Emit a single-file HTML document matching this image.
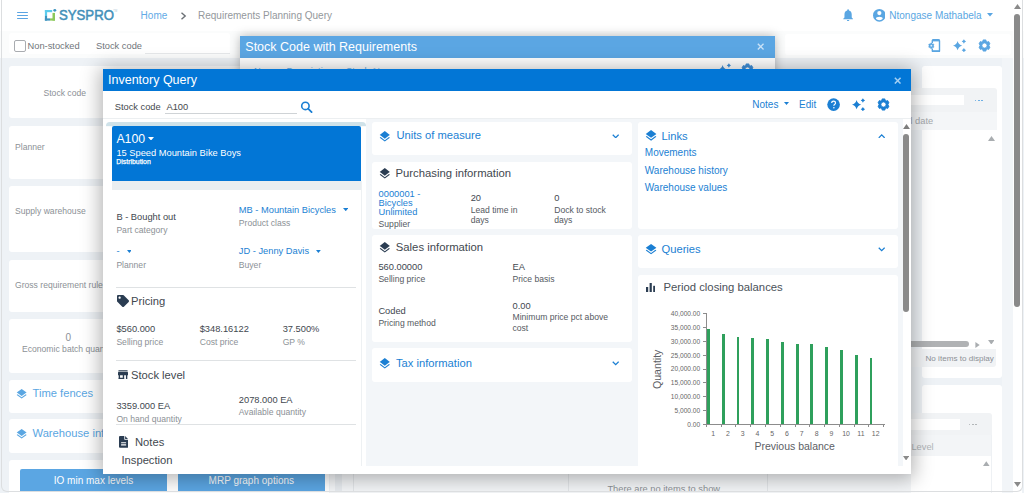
<!DOCTYPE html><html><head><meta charset="utf-8"><title>Inventory Query</title><style>
*{box-sizing:border-box}
html,body{margin:0;padding:0}
body{width:1024px;height:493px;overflow:hidden;position:relative;background:#fff;font-family:"Liberation Sans",sans-serif}
.t{position:absolute;line-height:1;white-space:nowrap}
.r{position:absolute;display:block}
</style></head><body>
<div class="r" style="left:0px;top:58px;width:1024px;height:435px;background:#eef2f6;"></div>
<div class="r" style="left:0px;top:0px;width:1024px;height:31px;background:#ffffff;box-shadow:0 1px 1px rgba(0,0,0,0.06)"></div>
<div class="r" style="left:17px;top:11.75px;width:11.3px;height:1.3px;background:#5aa4e2;border-radius:0.6px"></div>
<div class="r" style="left:17px;top:14.8px;width:11.3px;height:1.3px;background:#5aa4e2;border-radius:0.6px"></div>
<div class="r" style="left:17px;top:17.85px;width:11.3px;height:1.3px;background:#5aa4e2;border-radius:0.6px"></div>
<svg class="r" style="left:44px;top:8px;" width="13" height="13" viewBox="0 0 13 13"><rect x="0.9" y="2" width="7.3" height="2.2" fill="#5ccbec"/><rect x="0.9" y="2" width="2.2" height="6" fill="#5ccbec"/><rect x="0.9" y="7.9" width="2.2" height="4.7" fill="#3e94bf"/><rect x="0.9" y="10.4" width="5.1" height="2.2" fill="#3e94bf"/><rect x="8.5" y="4.9" width="2.5" height="7.7" fill="#8cc85a"/><rect x="6" y="10.4" width="5" height="2.2" fill="#8cc85a"/><circle cx="10.8" cy="2.35" r="1.45" fill="#3e94bf"/></svg>
<div class="t" style="left:59.20px;top:9.22px;font-size:13.8px;color:#4390b9;-webkit-text-stroke:0.5px #4390b9;transform:scaleX(0.955);transform-origin:left">SYSPRO</div>
<div class="t" style="left:113.30px;top:10.90px;font-size:2.6px;color:#a9c4d2;">TM</div>
<div class="t" style="left:140.60px;top:11.44px;font-size:10px;color:#62aae6;">Home</div>
<svg class="r" style="left:180px;top:12px;" width="7" height="8" viewBox="0 0 7 8"><polyline points="1.5,0.8 5.2,4 1.5,7.2" fill="none" stroke="#6b7075" stroke-width="1.4"/></svg>
<div class="t" style="left:198.00px;top:11.44px;font-size:10px;color:#94989c;">Requirements Planning Query</div>
<svg class="r" style="left:842.8px;top:9.4px;preserveAspectRatio:none" width="10.2" height="12.1" viewBox="4 2 16 20"><path d="M12 22c1.1 0 2-.9 2-2h-4c0 1.1.89 2 2 2zm6-6v-5c0-3.07-1.64-5.64-4.5-6.32V4c0-.83-.67-1.5-1.5-1.5s-1.5.67-1.5 1.5v.68C7.63 5.36 6 7.92 6 11v5l-2 2v1h16v-1l-2-2z" fill="#5aa6e2"/></svg>
<svg class="r" style="left:872.7px;top:9px;" width="12.7" height="12.7" viewBox="0 0 24 24"><circle cx="12" cy="12" r="12" fill="#5aa6e2"/><circle cx="12" cy="7.7" r="4" fill="#fff"/><path d="M5.6 17.6c0-1.6 2.8-3.1 6.4-3.1s6.4 1.5 6.4 3.1c0 1.9-2.8 3.5-6.4 3.5s-6.4-1.6-6.4-3.5z" fill="#fff"/></svg>
<div class="t" style="left:889.30px;top:10.94px;font-size:10px;color:#5aa6e2;">Ntongase Mathabela</div>
<svg class="r" style="left:987px;top:13px;" width="6" height="3.5" viewBox="0 0 6 3.5"><path d="M0 0h6L3 3.5z" fill="#5aa6e2"/></svg>
<div class="r" style="left:0px;top:31px;width:1024px;height:27px;background:#fbfcfc;"></div>
<div class="r" style="left:9px;top:33px;width:221px;height:21px;background:#ffffff;border-radius:3px"></div>
<div class="r" style="left:14px;top:39.5px;width:11.8px;height:12px;background:#fff;border:1.2px solid #a9acb0;border-radius:2px"></div>
<div class="t" style="left:27.50px;top:42.33px;font-size:9.3px;color:#70757a;">Non-stocked</div>
<div class="t" style="left:96.00px;top:42.33px;font-size:9.3px;color:#70757a;">Stock code</div>
<div class="r" style="left:145px;top:52.5px;width:85px;height:1px;background:#e6e8ea;"></div>
<div class="r" style="left:785px;top:34px;width:226px;height:21px;background:#ffffff;border-radius:3px"></div>
<svg class="r" style="left:928px;top:38.5px;" width="12.5" height="13.5" viewBox="0 0 12.5 13.5"><path d="M4.3 4V1.8a1 1 0 0 1 1-1h5.2a1 1 0 0 1 1 1v10a1 1 0 0 1-1 1H5.3a1 1 0 0 1-1-1V9.6" fill="none" stroke="#5aa6e2" stroke-width="1.4"/><rect x="4.3" y="0.6" width="7.2" height="1.8" fill="#5aa6e2"/><rect x="4.3" y="11.2" width="7.2" height="1.8" fill="#5aa6e2"/><path d="M2.52,4.74 L2.62,3.98 L3.98,3.98 L4.08,4.74 L4.40,4.89 L4.69,5.10 L5.40,4.80 L6.08,5.98 L5.47,6.44 L5.50,6.80 L5.47,7.16 L6.08,7.62 L5.40,8.80 L4.69,8.50 L4.40,8.71 L4.08,8.86 L3.98,9.62 L2.62,9.62 L2.52,8.86 L2.20,8.71 L1.91,8.50 L1.20,8.80 L0.52,7.62 L1.13,7.16 L1.10,6.80 L1.13,6.44 L0.52,5.98 L1.20,4.80 L1.91,5.10 L2.20,4.89Z M4.35,6.80 A1.05,1.05 0 1,0 2.25,6.80 A1.05,1.05 0 1,0 4.35,6.80Z" fill="#5aa6e2" fill-rule="evenodd" stroke="#5aa6e2" stroke-width="0.4" stroke-linejoin="round"/></svg>
<svg class="r" style="left:953.2px;top:38.6px;" width="13.5" height="13.5" viewBox="0 -4.4 13.5 13.5"><path d="M4.6,-2.3 Q5.5,1.4 9.2,2.3 Q5.5,3.1999999999999997 4.6,6.8999999999999995 Q3.6999999999999997,3.1999999999999997 0.0,2.3 Q3.6999999999999997,1.4 4.6,-2.3Z" fill="#5aa6e2"/><path d="M10.9,-4.1 Q11.5,-2.5 13.100000000000001,-1.9 Q11.5,-1.2999999999999998 10.9,0.30000000000000027 Q10.3,-1.2999999999999998 8.7,-1.9 Q10.3,-2.5 10.9,-4.1Z" fill="#5aa6e2"/><path d="M10.9,4.6 Q11.5,6.2 13.100000000000001,6.8 Q11.5,7.3999999999999995 10.9,9.0 Q10.3,7.3999999999999995 8.7,6.8 Q10.3,6.2 10.9,4.6Z" fill="#5aa6e2"/></svg>
<svg class="r" style="left:977.4px;top:37.8px;" width="15" height="15" viewBox="0 0 15 15"><path d="M5.86,3.31 L6.11,1.92 L8.89,1.92 L9.14,3.31 L9.75,3.60 L10.31,3.98 L11.64,3.51 L13.03,5.91 L11.95,6.83 L12.00,7.50 L11.95,8.17 L13.03,9.09 L11.64,11.49 L10.31,11.02 L9.75,11.40 L9.14,11.69 L8.89,13.08 L6.11,13.08 L5.86,11.69 L5.25,11.40 L4.69,11.02 L3.36,11.49 L1.97,9.09 L3.05,8.17 L3.00,7.50 L3.05,6.83 L1.97,5.91 L3.36,3.51 L4.69,3.98 L5.25,3.60Z M10.10,7.50 A2.6,2.6 0 1,0 4.90,7.50 A2.6,2.6 0 1,0 10.10,7.50Z" fill="#5aa6e2" fill-rule="evenodd" stroke="#5aa6e2" stroke-width="0.9" stroke-linejoin="round"/></svg>
<div class="r" style="left:9px;top:66px;width:320px;height:52px;background:#ffffff;border-radius:3px"></div>
<div class="r" style="left:9px;top:125.5px;width:320px;height:53px;background:#ffffff;border-radius:3px"></div>
<div class="r" style="left:9px;top:186px;width:320px;height:66px;background:#ffffff;border-radius:3px"></div>
<div class="r" style="left:9px;top:259.5px;width:320px;height:52.5px;background:#ffffff;border-radius:3px"></div>
<div class="r" style="left:9px;top:319px;width:320px;height:53.5px;background:#ffffff;border-radius:3px"></div>
<div class="r" style="left:9px;top:379.5px;width:320px;height:33.5px;background:#ffffff;border-radius:3px"></div>
<div class="r" style="left:9px;top:419px;width:320px;height:33.5px;background:#ffffff;border-radius:3px"></div>
<div class="r" style="left:9px;top:459.5px;width:320px;height:40px;background:#ffffff;border-radius:3px"></div>
<div class="t" style="right:938.00px;top:89.22px;font-size:8.6px;color:#8c9196;">Stock code</div>
<div class="t" style="left:15.00px;top:142.62px;font-size:8.6px;color:#8c9196;">Planner</div>
<div class="t" style="left:15.00px;top:207.02px;font-size:8.6px;color:#8c9196;">Supply warehouse</div>
<div class="t" style="left:15.00px;top:280.62px;font-size:8.6px;color:#8c9196;">Gross requirement rules</div>
<div class="t" style="left:-81.70px;width:300px;text-align:center;top:333.24px;font-size:10px;color:#8c9196;">0</div>
<div class="t" style="left:22.00px;top:345.12px;font-size:8.6px;color:#8c9196;">Economic batch quantity</div>
<svg class="r" style="left:14.53px;top:387.71px" width="13.33" height="11.87" viewBox="0 0 24 24" preserveAspectRatio="none"><path d="M11.99 18.54l-7.37-5.73L3 14.07l9 7 9-7-1.63-1.27-7.38 5.74zM12 16l7.36-5.73L21 9l-9-7-9 7 1.63 1.27L12 16z" fill="#5aa6e2"/></svg>
<div class="t" style="left:32.50px;top:388.42px;font-size:11.2px;color:#5aa6e2;">Time fences</div>
<svg class="r" style="left:14.53px;top:427.71px" width="13.33" height="11.87" viewBox="0 0 24 24" preserveAspectRatio="none"><path d="M11.99 18.54l-7.37-5.73L3 14.07l9 7 9-7-1.63-1.27-7.38 5.74zM12 16l7.36-5.73L21 9l-9-7-9 7 1.63 1.27L12 16z" fill="#5aa6e2"/></svg>
<div class="t" style="left:32.50px;top:427.92px;font-size:11.2px;color:#5aa6e2;">Warehouse information</div>
<div class="r" style="left:20px;top:468.5px;width:147px;height:22.2px;background:#5ba6e3;border-radius:2px 2px 0 0"></div>
<div class="t" style="left:-56.50px;width:300px;text-align:center;top:475.74px;font-size:10px;color:#ffffff;">IO min max levels</div>
<div class="r" style="left:178px;top:468.5px;width:146.5px;height:22.2px;background:#5ba6e3;border-radius:2px 2px 0 0"></div>
<div class="t" style="left:101.30px;width:300px;text-align:center;top:475.74px;font-size:10px;color:#ffffff;">MRP graph options</div>
<div class="r" style="left:330px;top:473px;width:590px;height:20px;background:#f4f6f8;"></div>
<div class="t" style="left:607.40px;top:484.63px;font-size:9.3px;color:#8c9196;">There are no items to show</div>
<div class="r" style="left:352.5px;top:473px;width:0.8px;height:18px;background:#e3e6e9;"></div>
<div class="r" style="left:567.5px;top:473px;width:0.8px;height:18px;background:#e3e6e9;"></div>
<div class="r" style="left:767px;top:473px;width:0.8px;height:18px;background:#e3e6e9;"></div>
<div class="r" style="left:335px;top:473px;width:7px;height:18px;background:#e8ecf0;"></div>
<div class="r" style="left:921.5px;top:65.7px;width:80.5px;height:312px;background:#ffffff;border-radius:3px"></div>
<div class="r" style="left:911px;top:88px;width:85.5px;height:24px;background:#f1f3f5;border-radius:3px 3px 0 0"></div>
<div class="r" style="left:911px;top:95px;width:53px;height:10px;background:#ffffff;"></div>
<div class="r" style="left:974.5px;top:99.5px;width:1.8px;height:1.8px;background:#5aa6e2;border-radius:1px"></div>
<div class="r" style="left:977.8px;top:99.5px;width:1.8px;height:1.8px;background:#5aa6e2;border-radius:1px"></div>
<div class="r" style="left:981.1px;top:99.5px;width:1.8px;height:1.8px;background:#5aa6e2;border-radius:1px"></div>
<div class="r" style="left:911px;top:112px;width:85.5px;height:18px;background:#f4f6f8;"></div>
<div class="t" style="left:896.00px;top:117.03px;font-size:9.3px;color:#a5a9ad;">End date</div>
<svg class="r" style="left:987.5px;top:136px;" width="7" height="5" viewBox="0 0 7 5"><path d="M0 5h7L3.5 0z" fill="#a9adb0"/></svg>
<div class="r" style="left:905px;top:341.1px;width:64px;height:5.9px;background:#b0b2b4;border-radius:3px"></div>
<svg class="r" style="left:975px;top:341.5px;preserveAspectRatio:none" width="5.1" height="6" viewBox="0 0 5 7"><path d="M0 0v7l5-3.5z" fill="#a9adb0"/></svg>
<svg class="r" style="left:987.8px;top:339.7px;preserveAspectRatio:none" width="6.6" height="4.6" viewBox="0 0 7 5"><path d="M0 0h7L3.5 5z" fill="#a9adb0"/></svg>
<div class="r" style="left:905px;top:349.4px;width:91.2px;height:17.6px;background:#f1f3f5;border-radius:0 0 3px 3px"></div>
<div class="t" style="left:925.50px;top:355.04px;font-size:8.1px;color:#8c9196;">No items to display</div>
<div class="r" style="left:921.5px;top:385.3px;width:80.5px;height:110px;background:#ffffff;border-radius:3px"></div>
<div class="r" style="left:911px;top:413.2px;width:80.5px;height:21.8px;background:#f1f3f5;border-radius:3px 3px 0 0"></div>
<div class="r" style="left:911px;top:419px;width:49px;height:11px;background:#ffffff;"></div>
<div class="r" style="left:968.5px;top:423.5px;width:1.8px;height:1.8px;background:#a9adb0;border-radius:1px"></div>
<div class="r" style="left:971.8px;top:423.5px;width:1.8px;height:1.8px;background:#a9adb0;border-radius:1px"></div>
<div class="r" style="left:975.1px;top:423.5px;width:1.8px;height:1.8px;background:#a9adb0;border-radius:1px"></div>
<div class="r" style="left:911px;top:435px;width:80.5px;height:20.5px;background:#f3f5f7;"></div>
<div class="r" style="left:911px;top:455.5px;width:80.5px;height:40px;background:#ffffff;"></div>
<div class="r" style="left:991px;top:435px;width:0.8px;height:60px;background:#eef1f4;"></div>
<div class="t" style="left:911.40px;top:443.03px;font-size:9.3px;color:#b0b4b8;">Level</div>
<svg class="r" style="left:983.4px;top:461.3px;preserveAspectRatio:none" width="6.6" height="5.2" viewBox="0 0 7 5"><path d="M0 5h7L3.5 0z" fill="#a9adb0"/></svg>
<div class="r" style="left:1002px;top:58px;width:11px;height:435px;background:#f2f5f8;"></div>
<div class="r" style="left:1013px;top:0px;width:9px;height:493px;background:#ffffff;"></div>
<svg class="r" style="left:1014px;top:4.3px;" width="7" height="5" viewBox="0 0 7 5"><path d="M0 5h7L3.5 0z" fill="#8a8a8a"/></svg>
<div class="r" style="left:1014.1px;top:14px;width:6.2px;height:293px;background:#8a8a8a;border-radius:3px"></div>
<svg class="r" style="left:1014px;top:482px;" width="7" height="5" viewBox="0 0 7 5"><path d="M0 0h7L3.5 5z" fill="#8a8a8a"/></svg>
<div class="r" style="left:240px;top:36px;width:534.5px;height:60px;background:#ffffff;box-shadow:0 0 10px rgba(0,0,0,0.28)"></div>
<div class="r" style="left:240px;top:36px;width:534.5px;height:21.5px;background:#5ba6e3;"></div>
<div class="t" style="left:245.30px;top:40.52px;font-size:12.5px;color:#ffffff;">Stock Code with Requirements</div>
<svg class="r" style="left:756.6px;top:43.3px;" width="7.4" height="7.4" viewBox="0 0 8 8"><path d="M0.9 0.9L7.1 7.1M7.1 0.9L0.9 7.1" stroke="#c9e2f7" stroke-width="1.5"/></svg>
<div class="t" style="left:254.00px;top:66.53px;font-size:9.3px;color:#6aaee6;">Name &nbsp; Description &nbsp; &nbsp; Stock At</div>
<svg class="r" style="left:717.5px;top:63px;" width="13.5" height="13.5" viewBox="0 -4.4 13.5 13.5"><path d="M4.6,-2.3 Q5.5,1.4 9.2,2.3 Q5.5,3.1999999999999997 4.6,6.8999999999999995 Q3.6999999999999997,3.1999999999999997 0.0,2.3 Q3.6999999999999997,1.4 4.6,-2.3Z" fill="#3f8fd8"/><path d="M10.9,-4.1 Q11.5,-2.5 13.100000000000001,-1.9 Q11.5,-1.2999999999999998 10.9,0.30000000000000027 Q10.3,-1.2999999999999998 8.7,-1.9 Q10.3,-2.5 10.9,-4.1Z" fill="#3f8fd8"/><path d="M10.9,4.6 Q11.5,6.2 13.100000000000001,6.8 Q11.5,7.3999999999999995 10.9,9.0 Q10.3,7.3999999999999995 8.7,6.8 Q10.3,6.2 10.9,4.6Z" fill="#3f8fd8"/></svg>
<svg class="r" style="left:739.5px;top:62.2px;" width="15" height="15" viewBox="0 0 15 15"><path d="M5.86,3.31 L6.11,1.92 L8.89,1.92 L9.14,3.31 L9.75,3.60 L10.31,3.98 L11.64,3.51 L13.03,5.91 L11.95,6.83 L12.00,7.50 L11.95,8.17 L13.03,9.09 L11.64,11.49 L10.31,11.02 L9.75,11.40 L9.14,11.69 L8.89,13.08 L6.11,13.08 L5.86,11.69 L5.25,11.40 L4.69,11.02 L3.36,11.49 L1.97,9.09 L3.05,8.17 L3.00,7.50 L3.05,6.83 L1.97,5.91 L3.36,3.51 L4.69,3.98 L5.25,3.60Z M10.10,7.50 A2.6,2.6 0 1,0 4.90,7.50 A2.6,2.6 0 1,0 10.10,7.50Z" fill="#3f8fd8" fill-rule="evenodd" stroke="#3f8fd8" stroke-width="0.9" stroke-linejoin="round"/></svg>
<div class="r" style="left:103px;top:68.8px;width:808px;height:405.2px;background:#ffffff;box-shadow:0 2px 18px 3px rgba(0,0,0,0.3)"></div>
<div class="r" style="left:103px;top:68.8px;width:808px;height:22.2px;background:#0276d6;"></div>
<div class="t" style="left:108.00px;top:74.32px;font-size:12.5px;color:#ffffff;">Inventory Query</div>
<svg class="r" style="left:893.8px;top:76.6px;" width="7.4" height="7.4" viewBox="0 0 8 8"><path d="M0.9 0.9L7.1 7.1M7.1 0.9L0.9 7.1" stroke="#a3cff3" stroke-width="1.6"/></svg>
<div class="t" style="left:114.70px;top:103.03px;font-size:9.3px;color:#45494d;">Stock code</div>
<div class="t" style="left:166.50px;top:103.03px;font-size:9.3px;color:#45494d;">A100</div>
<div class="r" style="left:164.7px;top:112.6px;width:132px;height:0.8px;background:#cfd3d6;"></div>
<svg class="r" style="left:300px;top:99.5px;" width="13" height="13" viewBox="0 0 13 13"><circle cx="5.4" cy="5.9" r="3.7" fill="none" stroke="#1b7fd3" stroke-width="1.6"/><path d="M8.1 8.6L11.6 12.1" stroke="#1b7fd3" stroke-width="1.8" stroke-linecap="round"/></svg>
<div class="t" style="left:752.30px;top:100.14px;font-size:10px;color:#1b7fd3;">Notes</div>
<svg class="r" style="left:784px;top:102.3px;" width="5" height="3" viewBox="0 0 5 3"><path d="M0 0h5L2.5 3z" fill="#1b7fd3"/></svg>
<div class="t" style="left:799.00px;top:100.14px;font-size:10px;color:#1b7fd3;">Edit</div>
<svg class="r" style="left:826.8px;top:98.2px;" width="13.2" height="13.2" viewBox="0 0 24 24"><circle cx="12" cy="12" r="11.5" fill="#1b7fd3"/><path d="M8.6 9.2c0-2 1.5-3.4 3.5-3.4s3.4 1.3 3.4 3.1c0 1.4-.8 2.1-1.8 2.8-.9.6-1.2 1-1.2 2v.5" fill="none" stroke="#fff" stroke-width="2.2"/><circle cx="12.5" cy="17.6" r="1.4" fill="#fff"/></svg>
<svg class="r" style="left:852.1px;top:97.8px;" width="13.5" height="13.5" viewBox="0 -4.4 13.5 13.5"><path d="M4.6,-2.3 Q5.5,1.4 9.2,2.3 Q5.5,3.1999999999999997 4.6,6.8999999999999995 Q3.6999999999999997,3.1999999999999997 0.0,2.3 Q3.6999999999999997,1.4 4.6,-2.3Z" fill="#1b7fd3"/><path d="M10.9,-4.1 Q11.5,-2.5 13.100000000000001,-1.9 Q11.5,-1.2999999999999998 10.9,0.30000000000000027 Q10.3,-1.2999999999999998 8.7,-1.9 Q10.3,-2.5 10.9,-4.1Z" fill="#1b7fd3"/><path d="M10.9,4.6 Q11.5,6.2 13.100000000000001,6.8 Q11.5,7.3999999999999995 10.9,9.0 Q10.3,7.3999999999999995 8.7,6.8 Q10.3,6.2 10.9,4.6Z" fill="#1b7fd3"/></svg>
<svg class="r" style="left:876.3px;top:97.2px;" width="15" height="15" viewBox="0 0 15 15"><path d="M5.86,3.31 L6.11,1.92 L8.89,1.92 L9.14,3.31 L9.75,3.60 L10.31,3.98 L11.64,3.51 L13.03,5.91 L11.95,6.83 L12.00,7.50 L11.95,8.17 L13.03,9.09 L11.64,11.49 L10.31,11.02 L9.75,11.40 L9.14,11.69 L8.89,13.08 L6.11,13.08 L5.86,11.69 L5.25,11.40 L4.69,11.02 L3.36,11.49 L1.97,9.09 L3.05,8.17 L3.00,7.50 L3.05,6.83 L1.97,5.91 L3.36,3.51 L4.69,3.98 L5.25,3.60Z M10.10,7.50 A2.6,2.6 0 1,0 4.90,7.50 A2.6,2.6 0 1,0 10.10,7.50Z" fill="#1b7fd3" fill-rule="evenodd" stroke="#1b7fd3" stroke-width="0.9" stroke-linejoin="round"/></svg>
<div class="r" style="left:103px;top:117.5px;width:808px;height:1px;background:#eceff1;"></div>
<div class="r" style="left:103px;top:118.5px;width:808px;height:347.5px;background:#ffffff;"></div>
<div class="r" style="left:365.6px;top:118.5px;width:537.4px;height:347.5px;background:#f3f6f9;"></div>
<div class="r" style="left:106.3px;top:121.9px;width:259.3px;height:345px;background:#f8fafb;border-radius:4px 4px 0 0"></div>
<div class="r" style="left:106.3px;top:121.9px;width:259.3px;height:4.6px;background:#cfe2e9;border-radius:4px 4px 0 0"></div>
<div class="r" style="left:106.3px;top:126.5px;width:259.3px;height:340px;background:#ffffff;"></div>
<div class="r" style="left:111.8px;top:126.4px;width:249px;height:55px;background:#0276d6;border-radius:2px 2px 0 0"></div>
<div class="t" style="left:116.40px;top:132.99px;font-size:12.3px;color:#ffffff;">A100</div>
<svg class="r" style="left:148.4px;top:136.5px;" width="6" height="3.5" viewBox="0 0 6 3.5"><path d="M0 0h6L3 3.5z" fill="#ffffff"/></svg>
<div class="t" style="left:116.40px;top:149.03px;font-size:9.3px;color:#ffffff;">15 Speed Mountain Bike Boys</div>
<div class="t" style="left:116.30px;top:159.26px;font-size:6.9px;color:#ffffff;-webkit-text-stroke:0.25px #fff">Distribution</div>
<div class="r" style="left:111.8px;top:181.2px;width:249px;height:9.2px;background:#e9eef1;"></div>
<div class="r" style="left:111.8px;top:190.4px;width:249px;height:276px;background:#ffffff;"></div>
<div class="r" style="left:361px;top:181px;width:1px;height:285px;background:#eef1f3;"></div>
<div class="t" style="left:116.40px;top:213.03px;font-size:9.3px;color:#42484f;">B - Bought out</div>
<div class="t" style="left:116.40px;top:225.62px;font-size:8.6px;color:#8c9196;">Part category</div>
<div class="t" style="left:238.80px;top:206.43px;font-size:9.3px;color:#1b7fd3;">MB - Mountain Bicycles</div>
<svg class="r" style="left:342.8px;top:207.8px;" width="5.5" height="3.2" viewBox="0 0 5.5 3.2"><path d="M0 0h5.5L2.75 3.2z" fill="#1b7fd3"/></svg>
<div class="t" style="left:238.80px;top:219.22px;font-size:8.6px;color:#8c9196;">Product class</div>
<div class="t" style="left:116.50px;top:247.33px;font-size:9.3px;color:#1b7fd3;">-</div>
<svg class="r" style="left:126.5px;top:250px;" width="4.8" height="3" viewBox="0 0 5.5 3.2"><path d="M0 0h5.5L2.75 3.2z" fill="#1b7fd3"/></svg>
<div class="t" style="left:116.40px;top:261.12px;font-size:8.6px;color:#8c9196;">Planner</div>
<div class="t" style="left:238.80px;top:247.33px;font-size:9.3px;color:#1b7fd3;">JD - Jenny Davis</div>
<svg class="r" style="left:316.2px;top:250px;" width="4.8" height="3" viewBox="0 0 5.5 3.2"><path d="M0 0h5.5L2.75 3.2z" fill="#1b7fd3"/></svg>
<div class="t" style="left:238.80px;top:261.12px;font-size:8.6px;color:#8c9196;">Buyer</div>
<div class="r" style="left:116.4px;top:286.6px;width:239.4px;height:1px;background:#dfe2e4;"></div>
<svg class="r" style="left:117px;top:294.8px;" width="12" height="12" viewBox="0 0 512 512"><path d="M0 252.118V48C0 21.49 21.49 0 48 0h204.118a48 48 0 0 1 33.941 14.059l211.882 211.882c18.745 18.745 18.745 49.137 0 67.882L293.823 497.941c-18.745 18.745-49.137 18.745-67.882 0L14.059 286.059A48 48 0 0 1 0 252.118zM112 64c-26.51 0-48 21.49-48 48s21.49 48 48 48 48-21.49 48-48-21.49-48-48-48z" fill="#2b3d52"/></svg>
<div class="t" style="left:131.00px;top:296.32px;font-size:11.2px;color:#42484f;">Pricing</div>
<div class="t" style="left:116.40px;top:324.53px;font-size:9.3px;color:#42484f;">$560.000</div>
<div class="t" style="left:116.40px;top:338.32px;font-size:8.6px;color:#8c9196;">Selling price</div>
<div class="t" style="left:199.70px;top:324.53px;font-size:9.3px;color:#42484f;">$348.16122</div>
<div class="t" style="left:199.70px;top:338.32px;font-size:8.6px;color:#8c9196;">Cost price</div>
<div class="t" style="left:282.70px;top:324.53px;font-size:9.3px;color:#42484f;">37.500%</div>
<div class="t" style="left:282.70px;top:338.32px;font-size:8.6px;color:#8c9196;">GP %</div>
<div class="r" style="left:116.4px;top:360.2px;width:239.4px;height:1px;background:#dfe2e4;"></div>
<svg class="r" style="left:118px;top:369.6px;" width="10" height="9.6" viewBox="0 0 22 20"><rect x="1" y="0" width="20" height="2.2" fill="#2b3d52"/><path d="M0.5 3.5h21l1 5.5v2H-0.5V9z" fill="#2b3d52"/><rect x="1.5" y="10" width="3" height="9.5" fill="#2b3d52"/><rect x="17.5" y="10" width="3" height="9.5" fill="#2b3d52"/><rect x="1.5" y="16.5" width="12" height="3" fill="#2b3d52"/><rect x="10.5" y="10" width="3" height="9.5" fill="#2b3d52"/></svg>
<div class="t" style="left:131.00px;top:369.72px;font-size:11.2px;color:#42484f;">Stock level</div>
<div class="t" style="left:116.40px;top:402.03px;font-size:9.3px;color:#42484f;">3359.000 EA</div>
<div class="t" style="left:116.40px;top:415.02px;font-size:8.6px;color:#8c9196;">On hand quantity</div>
<div class="t" style="left:238.80px;top:395.63px;font-size:9.3px;color:#42484f;">2078.000 EA</div>
<div class="t" style="left:238.80px;top:408.22px;font-size:8.6px;color:#8c9196;">Available quantity</div>
<div class="r" style="left:116.4px;top:423.8px;width:239.4px;height:1px;background:#dfe2e4;"></div>
<svg class="r" style="left:118.9px;top:436px;" width="9.4" height="11.8" viewBox="0 0 9.4 11.8"><path d="M1,0 H5.3 V3.1 a1,1 0 0 0 1,1 H9.3 V10.8 a1,1 0 0 1 -1,1 H1 a1,1 0 0 1 -1,-1 V1 a1,1 0 0 1 1,-1 Z" fill="#2b3d52"/><path d="M6.1,0 L9.3,3.3 H6.1 Z" fill="#2b3d52"/><rect x="2" y="6.2" width="5.2" height="1.1" rx="0.5" fill="#fff"/><rect x="2" y="8.3" width="5.2" height="1.1" rx="0.5" fill="#fff"/></svg>
<div class="t" style="left:135.00px;top:437.22px;font-size:11.2px;color:#42484f;">Notes</div>
<div class="t" style="left:121.50px;top:455.02px;font-size:11.2px;color:#42484f;">Inspection</div>
<div class="r" style="left:372px;top:122.4px;width:259.5px;height:32.2px;background:#ffffff;border-radius:3px"></div>
<svg class="r" style="left:377.90px;top:129.71px" width="13.60" height="13.14" viewBox="0 0 24 24" preserveAspectRatio="none"><path d="M11.99 18.54l-7.37-5.73L3 14.07l9 7 9-7-1.63-1.27-7.38 5.74zM12 16l7.36-5.73L21 9l-9-7-9 7 1.63 1.27L12 16z" fill="#1b7fd3"/></svg>
<div class="t" style="left:396.40px;top:130.42px;font-size:11.2px;color:#1b7fd3;">Units of measure</div>
<svg class="r" style="left:611.5px;top:133.8px;" width="7.4" height="4.6" viewBox="0 0 8 5"><polyline points="0.8,0.8 4,4 7.2,0.8" fill="none" stroke="#1b7fd3" stroke-width="1.4"/></svg>
<div class="r" style="left:372px;top:161.5px;width:259.5px;height:67px;background:#ffffff;border-radius:3px"></div>
<svg class="r" style="left:377.50px;top:166.71px" width="13.60" height="13.14" viewBox="0 0 24 24" preserveAspectRatio="none"><path d="M11.99 18.54l-7.37-5.73L3 14.07l9 7 9-7-1.63-1.27-7.38 5.74zM12 16l7.36-5.73L21 9l-9-7-9 7 1.63 1.27L12 16z" fill="#2b3d52"/></svg>
<div class="t" style="left:395.50px;top:167.83px;font-size:11.3px;color:#42484f;">Purchasing information</div>
<div class="t" style="left:378.60px;top:190.03px;font-size:9.3px;color:#1b7fd3;">0000001 -</div>
<div class="t" style="left:378.60px;top:199.23px;font-size:9.3px;color:#1b7fd3;">Bicycles</div>
<div class="t" style="left:378.60px;top:208.43px;font-size:9.3px;color:#1b7fd3;">Unlimited</div>
<div class="t" style="left:378.60px;top:220.22px;font-size:8.6px;color:#555a5f;">Supplier</div>
<div class="t" style="left:470.70px;top:194.13px;font-size:9.3px;color:#42484f;">20</div>
<div class="t" style="left:470.70px;top:205.62px;font-size:8.6px;color:#555a5f;">Lead time in</div>
<div class="t" style="left:470.70px;top:215.82px;font-size:8.6px;color:#555a5f;">days</div>
<div class="t" style="left:554.20px;top:194.13px;font-size:9.3px;color:#42484f;">0</div>
<div class="t" style="left:554.20px;top:205.62px;font-size:8.6px;color:#555a5f;">Dock to stock</div>
<div class="t" style="left:554.20px;top:215.82px;font-size:8.6px;color:#555a5f;">days</div>
<div class="r" style="left:372px;top:235px;width:259.5px;height:107px;background:#ffffff;border-radius:3px"></div>
<svg class="r" style="left:377.60px;top:240.71px" width="13.60" height="13.14" viewBox="0 0 24 24" preserveAspectRatio="none"><path d="M11.99 18.54l-7.37-5.73L3 14.07l9 7 9-7-1.63-1.27-7.38 5.74zM12 16l7.36-5.73L21 9l-9-7-9 7 1.63 1.27L12 16z" fill="#2b3d52"/></svg>
<div class="t" style="left:395.80px;top:241.73px;font-size:11.3px;color:#42484f;">Sales information</div>
<div class="t" style="left:378.40px;top:263.23px;font-size:9.3px;color:#42484f;">560.00000</div>
<div class="t" style="left:378.40px;top:274.82px;font-size:8.6px;color:#555a5f;">Selling price</div>
<div class="t" style="left:512.50px;top:263.23px;font-size:9.3px;color:#42484f;">EA</div>
<div class="t" style="left:512.50px;top:274.82px;font-size:8.6px;color:#555a5f;">Price basis</div>
<div class="t" style="left:378.40px;top:306.63px;font-size:9.3px;color:#42484f;">Coded</div>
<div class="t" style="left:378.40px;top:318.92px;font-size:8.6px;color:#555a5f;">Pricing method</div>
<div class="t" style="left:512.50px;top:301.63px;font-size:9.3px;color:#42484f;">0.00</div>
<div class="t" style="left:512.50px;top:313.22px;font-size:8.6px;color:#555a5f;">Minimum price pct above</div>
<div class="t" style="left:512.50px;top:324.02px;font-size:8.6px;color:#555a5f;">cost</div>
<div class="r" style="left:372px;top:348px;width:259.5px;height:33.5px;background:#ffffff;border-radius:3px"></div>
<svg class="r" style="left:377.60px;top:356.71px" width="13.60" height="13.14" viewBox="0 0 24 24" preserveAspectRatio="none"><path d="M11.99 18.54l-7.37-5.73L3 14.07l9 7 9-7-1.63-1.27-7.38 5.74zM12 16l7.36-5.73L21 9l-9-7-9 7 1.63 1.27L12 16z" fill="#1b7fd3"/></svg>
<div class="t" style="left:396.00px;top:357.52px;font-size:11.2px;color:#1b7fd3;">Tax information</div>
<svg class="r" style="left:611.5px;top:361px;" width="7.4" height="4.6" viewBox="0 0 8 5"><polyline points="0.8,0.8 4,4 7.2,0.8" fill="none" stroke="#1b7fd3" stroke-width="1.4"/></svg>
<div class="r" style="left:638px;top:122px;width:260px;height:106.6px;background:#ffffff;border-radius:3px"></div>
<svg class="r" style="left:643.53px;top:129.29px" width="14.13" height="13.26" viewBox="0 0 24 24" preserveAspectRatio="none"><path d="M11.99 18.54l-7.37-5.73L3 14.07l9 7 9-7-1.63-1.27-7.38 5.74zM12 16l7.36-5.73L21 9l-9-7-9 7 1.63 1.27L12 16z" fill="#1b7fd3"/></svg>
<div class="t" style="left:661.50px;top:130.92px;font-size:11.2px;color:#1b7fd3;">Links</div>
<svg class="r" style="left:877.5px;top:133.5px;" width="7.4" height="4.6" viewBox="0 0 8 5"><polyline points="0.8,4.2 4,1 7.2,4.2" fill="none" stroke="#1b7fd3" stroke-width="1.4"/></svg>
<div class="t" style="left:644.80px;top:147.84px;font-size:10px;color:#1b7fd3;">Movements</div>
<div class="t" style="left:644.80px;top:165.84px;font-size:10px;color:#1b7fd3;">Warehouse history</div>
<div class="t" style="left:644.80px;top:182.53px;font-size:10px;color:#1b7fd3;">Warehouse values</div>
<div class="r" style="left:638px;top:235px;width:260px;height:33.4px;background:#ffffff;border-radius:3px"></div>
<svg class="r" style="left:643.53px;top:243.23px" width="14.13" height="12.88" viewBox="0 0 24 24" preserveAspectRatio="none"><path d="M11.99 18.54l-7.37-5.73L3 14.07l9 7 9-7-1.63-1.27-7.38 5.74zM12 16l7.36-5.73L21 9l-9-7-9 7 1.63 1.27L12 16z" fill="#1b7fd3"/></svg>
<div class="t" style="left:661.50px;top:243.72px;font-size:11.2px;color:#1b7fd3;">Queries</div>
<svg class="r" style="left:877.5px;top:247px;" width="7.4" height="4.6" viewBox="0 0 8 5"><polyline points="0.8,0.8 4,4 7.2,0.8" fill="none" stroke="#1b7fd3" stroke-width="1.4"/></svg>
<div class="r" style="left:638px;top:275px;width:260px;height:195px;background:#ffffff;border-radius:3px"></div>
<svg class="r" style="left:645.5px;top:282.6px;" width="9.5" height="9" viewBox="0 0 9.5 9"><rect x="0" y="4" width="2.2" height="5" fill="#2b3d52"/><rect x="3.6" y="0" width="2.2" height="9" fill="#2b3d52"/><rect x="7.2" y="2.8" width="2.2" height="6.2" fill="#2b3d52"/></svg>
<div class="t" style="left:663.40px;top:281.73px;font-size:11.3px;color:#4a5159;">Period closing balances</div>
<div class="r" style="left:705.9px;top:313.0px;width:1.1px;height:112.1px;background:#8c8c8c;"></div>
<div class="r" style="left:705.9px;top:424.0px;width:179px;height:1.1px;background:#8c8c8c;"></div>
<div class="r" style="left:702.8px;top:424.0px;width:3.2px;height:1px;background:#8c8c8c;"></div>
<div class="t" style="right:323.80px;top:421.91px;font-size:6.6px;color:#666;">0.00</div>
<div class="r" style="left:702.8px;top:410.125px;width:3.2px;height:1px;background:#8c8c8c;"></div>
<div class="t" style="right:323.80px;top:408.04px;font-size:6.6px;color:#666;">5,000.00</div>
<div class="r" style="left:702.8px;top:396.25px;width:3.2px;height:1px;background:#8c8c8c;"></div>
<div class="t" style="right:323.80px;top:394.16px;font-size:6.6px;color:#666;">10,000.00</div>
<div class="r" style="left:702.8px;top:382.375px;width:3.2px;height:1px;background:#8c8c8c;"></div>
<div class="t" style="right:323.80px;top:380.29px;font-size:6.6px;color:#666;">15,000.00</div>
<div class="r" style="left:702.8px;top:368.5px;width:3.2px;height:1px;background:#8c8c8c;"></div>
<div class="t" style="right:323.80px;top:366.41px;font-size:6.6px;color:#666;">20,000.00</div>
<div class="r" style="left:702.8px;top:354.625px;width:3.2px;height:1px;background:#8c8c8c;"></div>
<div class="t" style="right:323.80px;top:352.54px;font-size:6.6px;color:#666;">25,000.00</div>
<div class="r" style="left:702.8px;top:340.75px;width:3.2px;height:1px;background:#8c8c8c;"></div>
<div class="t" style="right:323.80px;top:338.66px;font-size:6.6px;color:#666;">30,000.00</div>
<div class="r" style="left:702.8px;top:326.875px;width:3.2px;height:1px;background:#8c8c8c;"></div>
<div class="t" style="right:323.80px;top:324.79px;font-size:6.6px;color:#666;">35,000.00</div>
<div class="r" style="left:702.8px;top:313.0px;width:3.2px;height:1px;background:#8c8c8c;"></div>
<div class="t" style="right:323.80px;top:310.91px;font-size:6.6px;color:#666;">40,000.00</div>
<div class="r" style="left:707.0px;top:328.8175px;width:2.9px;height:95.1825px;background:#2fa05c;"></div>
<div class="r" style="left:721.78px;top:333.53499999999997px;width:2.9px;height:90.46500000000003px;background:#2fa05c;"></div>
<div class="r" style="left:736.56px;top:336.865px;width:2.9px;height:87.13499999999999px;background:#2fa05c;"></div>
<div class="r" style="left:751.34px;top:338.2525px;width:2.9px;height:85.7475px;background:#2fa05c;"></div>
<div class="r" style="left:766.12px;top:338.53px;width:2.9px;height:85.47000000000003px;background:#2fa05c;"></div>
<div class="r" style="left:780.9px;top:341.5825px;width:2.9px;height:82.41750000000002px;background:#2fa05c;"></div>
<div class="r" style="left:795.68px;top:343.525px;width:2.9px;height:80.47500000000002px;background:#2fa05c;"></div>
<div class="r" style="left:810.46px;top:343.525px;width:2.9px;height:80.47500000000002px;background:#2fa05c;"></div>
<div class="r" style="left:825.24px;top:346.5775px;width:2.9px;height:77.42250000000001px;background:#2fa05c;"></div>
<div class="r" style="left:840.02px;top:350.4625px;width:2.9px;height:73.53750000000002px;background:#2fa05c;"></div>
<div class="r" style="left:854.8px;top:355.4575px;width:2.9px;height:68.54250000000002px;background:#2fa05c;"></div>
<div class="r" style="left:869.5799999999999px;top:357.955px;width:2.9px;height:66.04500000000002px;background:#2fa05c;"></div>
<div class="r" style="left:705.9px;top:424.0px;width:1px;height:3px;background:#8c8c8c;"></div>
<div class="r" style="left:720.68px;top:424.0px;width:1px;height:3px;background:#8c8c8c;"></div>
<div class="r" style="left:735.4599999999999px;top:424.0px;width:1px;height:3px;background:#8c8c8c;"></div>
<div class="r" style="left:750.24px;top:424.0px;width:1px;height:3px;background:#8c8c8c;"></div>
<div class="r" style="left:765.02px;top:424.0px;width:1px;height:3px;background:#8c8c8c;"></div>
<div class="r" style="left:779.8px;top:424.0px;width:1px;height:3px;background:#8c8c8c;"></div>
<div class="r" style="left:794.5799999999999px;top:424.0px;width:1px;height:3px;background:#8c8c8c;"></div>
<div class="r" style="left:809.36px;top:424.0px;width:1px;height:3px;background:#8c8c8c;"></div>
<div class="r" style="left:824.14px;top:424.0px;width:1px;height:3px;background:#8c8c8c;"></div>
<div class="r" style="left:838.92px;top:424.0px;width:1px;height:3px;background:#8c8c8c;"></div>
<div class="r" style="left:853.6999999999999px;top:424.0px;width:1px;height:3px;background:#8c8c8c;"></div>
<div class="r" style="left:868.48px;top:424.0px;width:1px;height:3px;background:#8c8c8c;"></div>
<div class="r" style="left:883.26px;top:424.0px;width:1px;height:3px;background:#8c8c8c;"></div>
<div class="t" style="left:563.10px;width:300px;text-align:center;top:431.16px;font-size:6.9px;color:#666;">1</div>
<div class="t" style="left:577.88px;width:300px;text-align:center;top:431.16px;font-size:6.9px;color:#666;">2</div>
<div class="t" style="left:592.66px;width:300px;text-align:center;top:431.16px;font-size:6.9px;color:#666;">3</div>
<div class="t" style="left:607.44px;width:300px;text-align:center;top:431.16px;font-size:6.9px;color:#666;">4</div>
<div class="t" style="left:622.22px;width:300px;text-align:center;top:431.16px;font-size:6.9px;color:#666;">5</div>
<div class="t" style="left:637.00px;width:300px;text-align:center;top:431.16px;font-size:6.9px;color:#666;">6</div>
<div class="t" style="left:651.78px;width:300px;text-align:center;top:431.16px;font-size:6.9px;color:#666;">7</div>
<div class="t" style="left:666.56px;width:300px;text-align:center;top:431.16px;font-size:6.9px;color:#666;">8</div>
<div class="t" style="left:681.34px;width:300px;text-align:center;top:431.16px;font-size:6.9px;color:#666;">9</div>
<div class="t" style="left:696.12px;width:300px;text-align:center;top:431.16px;font-size:6.9px;color:#666;">10</div>
<div class="t" style="left:710.90px;width:300px;text-align:center;top:431.16px;font-size:6.9px;color:#666;">11</div>
<div class="t" style="left:725.68px;width:300px;text-align:center;top:431.16px;font-size:6.9px;color:#666;">12</div>
<div class="t" style="left:754.40px;top:441.41px;font-size:10.5px;color:#5c6065;">Previous balance</div>
<div class="t" style="left:632.4px;top:363.8px;width:50px;text-align:center;font-size:10.6px;color:#5c6065;transform:rotate(-90deg);transform-origin:25px 5.3px">Quantity</div>
<div class="r" style="left:903px;top:118.5px;width:8px;height:347.5px;background:#ffffff;"></div>
<svg class="r" style="left:902.5px;top:123.5px;preserveAspectRatio:none" width="7" height="5.2" viewBox="0 0 7 5"><path d="M0 5h7L3.5 0z" fill="#7d7d7d"/></svg>
<div class="r" style="left:903.4px;top:134px;width:5.5px;height:177.7px;background:#8a8a8a;border-radius:3px"></div>
<svg class="r" style="left:902.8px;top:455.5px;" width="6.2" height="4.5" viewBox="0 0 7 5"><path d="M0 0h7L3.5 5z" fill="#8a8a8a"/></svg>
<div class="r" style="left:0.5px;top:-2px;width:1022.5px;height:494px;border:1.3px solid #dcdee0;border-top:none;border-radius:0 0 6px 6px"></div>
</body></html>
